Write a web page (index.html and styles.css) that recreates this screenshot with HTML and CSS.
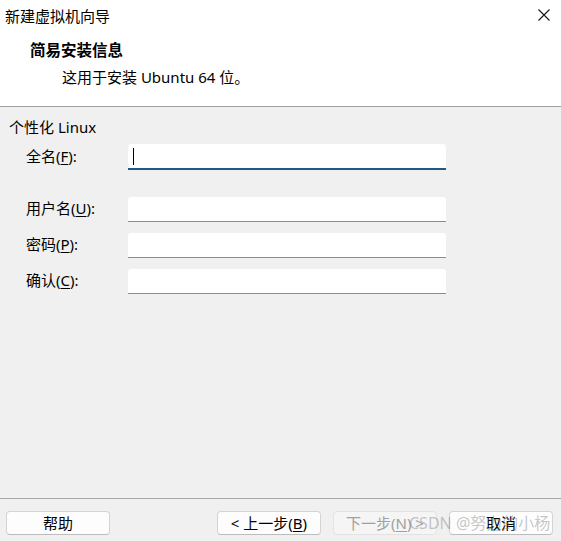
FILE: index.html
```html
<!DOCTYPE html>
<html lang="zh-CN">
<head>
<meta charset="utf-8">
<title>新建虚拟机向导</title>
<link rel="stylesheet" href="styles.css">
</head>
<body>
<div class="window">
  <div class="top">
    <div class="titlebar">
      <span class="title">新建虚拟机向导</span>
      <span class="close">
        <svg width="12" height="12" viewBox="0 0 12 12"><path d="M0.5 0.5 L11.5 11.5 M11.5 0.5 L0.5 11.5" stroke="#1a1a1a" stroke-width="1.2" fill="none"/></svg>
      </span>
    </div>
    <div class="header">
      <div class="heading">简易安装信息</div>
      <div class="subtitle">这用于安装 Ubuntu 64 位。</div>
    </div>
  </div>
  <div class="main">
    <div class="section">个性化 Linux</div>
    <div class="form">
      <div class="row row-first">
        <span class="label">全名(<u>F</u>):</span>
        <div class="field focused"><span class="caret"></span></div>
      </div>
      <div class="row row-second">
        <span class="label">用户名(<u>U</u>):</span>
        <div class="field"></div>
      </div>
      <div class="row">
        <span class="label">密码(<u>P</u>):</span>
        <div class="field"></div>
      </div>
      <div class="row">
        <span class="label">确认(<u>C</u>):</span>
        <div class="field"></div>
      </div>
    </div>
  </div>
  <div class="footer">
    <div class="btn">帮助</div>
    <div class="spacer"></div>
    <div class="btn">&lt; 上一步(<u>B</u>)</div>
    <div class="btn disabled">下一步(<u>N</u>) &gt;</div>
    <div class="btn">取消</div>
  </div>
  <div class="watermark">CSDN @努力的小杨</div>
</div>
</body>
</html>
```

FILE: styles.css
```css
* { box-sizing: border-box; }
html, body { margin: 0; padding: 0; }
body {
  background: #f0f0f0;
  font-family: "Noto Sans", "Noto Sans CJK SC", sans-serif;
  font-size: 15px;
  color: #000;
}
.window {
  position: relative;
  width: 561px;
  height: 541px;
  display: flex;
  flex-direction: column;
  overflow: hidden;
}
.top {
  background: #fff;
  height: 107px;
  border-bottom: 1px solid #a0a0a0;
}
.titlebar {
  height: 32px;
  display: flex;
  align-items: center;
  justify-content: space-between;
  padding-left: 5px;
  padding-right: 11px;
  line-height: 20px;
}
.close { display: flex; width: 12px; height: 12px; margin-top: -2px; }
.header { padding-left: 30px; }
.heading {
  margin-top: 8px;
  font-weight: bold;
  font-size: 15.5px;
  line-height: 20px;
}
.subtitle {
  margin-top: 7px;
  margin-left: 32px;
  line-height: 20px;
}
.main {
  flex: 1;
  padding-top: 10px;
}
.section {
  padding-left: 9px;
  line-height: 20px;
}
.form {
  padding-left: 26px;
  margin-top: 7px;
}
.row {
  display: flex;
  align-items: center;
  height: 25px;
  margin-top: 11px;
}
.row-first { margin-top: 0; height: 26px; }
.row-second { margin-top: 27px; }
.label {
  width: 102px;
  line-height: 20px;
  margin-top: -3px;
}
.label u { text-underline-offset: 2px; }
.field {
  width: 318px;
  height: 100%;
  background: #fff;
  border-bottom: 1px solid #8c8c8c;
  border-radius: 3px 3px 0 0;
  position: relative;
}
.field.focused {
  border-bottom: 2px solid #1f5a84;
}
.caret {
  position: absolute;
  left: 5px;
  top: 4px;
  width: 1px;
  height: 17px;
  background: #000;
}
.footer {
  height: 43px;
  border-top: 1px solid #a8a8a8;
  display: flex;
  align-items: flex-start;
  padding: 12px 8px 0 6px;
  gap: 12px;
}
.spacer { flex: 1; }
.btn {
  width: 104px;
  height: 24px;
  background: #fdfdfd;
  border: 1px solid #d4d4d4;
  border-bottom-color: #bcbcbc;
  border-radius: 4px;
  display: flex;
  align-items: center;
  justify-content: center;
  line-height: 20px;
}
.btn u { text-underline-offset: 2px; }
.btn.disabled {
  background: #f5f5f5;
  border-color: #e3e3e3;
  color: #a0a0a0;
}
.watermark {
  position: absolute;
  left: 409px;
  top: 512px;
  font-size: 16px;
  line-height: 22px;
  color: rgba(130, 130, 130, 0.45);
  white-space: nowrap;
}
```
